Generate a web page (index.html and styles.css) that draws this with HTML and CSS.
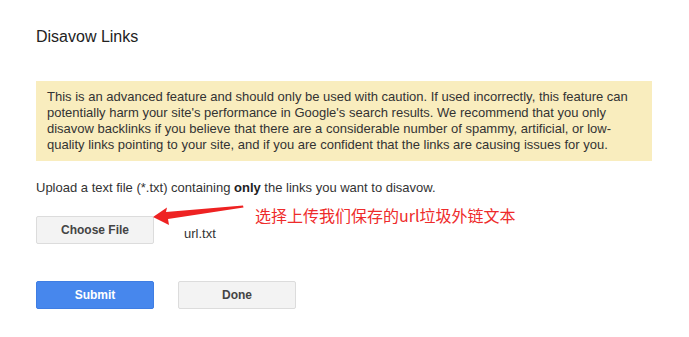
FILE: index.html
```html
<!DOCTYPE html>
<html>
<head>
<meta charset="utf-8">
<link rel="stylesheet" href="styles.css">
</head>
<body>
<div class="page">
  <h1 class="title">Disavow Links</h1>
  <div class="warning">This is an advanced feature and should only be used with caution. If used incorrectly, this feature can potentially harm your site's performance in Google's search results. We recommend that you only disavow backlinks if you believe that there are a considerable number of spammy, artificial, or low-quality links pointing to your site, and if you are confident that the links are causing issues for you.</div>
  <p class="upload">Upload a text file (*.txt) containing <b>only</b> the links you want to disavow.</p>
  <div class="file-row">
    <button class="btn">Choose File</button>
    <span class="filename">url.txt</span>
  </div>
  <div class="actions">
    <button class="btn btn-primary">Submit</button>
    <button class="btn">Done</button>
  </div>
  <svg class="arrow" width="689" height="337" viewBox="0 0 689 337">
    <polygon points="153,217 167,207.5 166,212 243,205.5 243.5,207.5 168,219 169,225" fill="#ee2222"/>
  </svg>
  <div class="note">选择上传我们保存的url垃圾外链文本</div>
</div>
</body>
</html>
```
FILE: styles.css
```css
html, body {
  margin: 0;
  padding: 0;
  background: #fff;
}
body {
  font-family: "Liberation Sans", Arial, sans-serif;
  color: #333;
}
.page {
  position: relative;
  width: 689px;
  height: 337px;
  box-sizing: border-box;
  padding: 28px 0 0 36px;
}
.title {
  margin: 0;
  font-size: 16px;
  line-height: 18px;
  font-weight: normal;
  color: #222;
}
.warning {
  margin-top: 35px;
  width: 616px;
  box-sizing: border-box;
  padding: 8px 11px 8px 11px;
  background: #f9edbe;
  font-size: 13px;
  line-height: 16px;
  color: #333;
}
.upload {
  margin: 19px 0 0 0;
  font-size: 13px;
  line-height: 16px;
  color: #333;
}
.upload b {
  color: #222;
}
.file-row {
  margin-top: 20px;
  display: flex;
  align-items: flex-start;
  gap: 30px;
}
.filename {
  padding-top: 10px;
  font-size: 13px;
  line-height: 16px;
  color: #333;
}
.btn {
  width: 118px;
  height: 28px;
  box-sizing: border-box;
  border: 1px solid #dcdcdc;
  border-radius: 2px;
  background: #f3f3f3;
  font-family: "Liberation Sans", Arial, sans-serif;
  font-size: 12px;
  font-weight: bold;
  color: #444;
  padding: 0;
}
.btn-primary {
  background: #4787ed;
  border-color: #3f7de3;
  color: #fff;
}
.actions {
  margin-top: 37px;
  display: flex;
  gap: 24px;
}
.arrow {
  position: absolute;
  left: 0;
  top: 0;
  pointer-events: none;
}
.note {
  position: absolute;
  left: 255px;
  top: 205px;
  font-family: "Noto Sans CJK SC", "Liberation Sans", sans-serif;
  font-size: 16px;
  line-height: 20px;
  color: #ee2b2b;
  white-space: nowrap;
}
```
